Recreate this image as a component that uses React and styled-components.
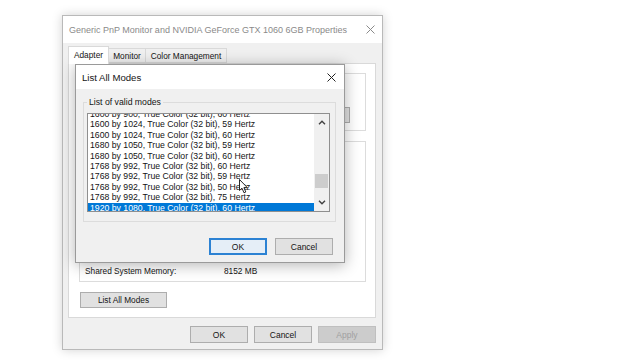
import React from "react"
import styled, { createGlobalStyle } from "styled-components"

const GlobalStyle = createGlobalStyle`
  html, body {
    margin: 0;
    padding: 0;
    background: #ffffff;
  }
  body {
    font-family: "Liberation Sans", Arial, sans-serif;
    color: #141414;
  }
  * {
    box-sizing: border-box;
  }
`

const modes = [
  ["1600 by 900", 60],
  ["1600 by 1024", 59],
  ["1600 by 1024", 60],
  ["1680 by 1050", 59],
  ["1680 by 1050", 60],
  ["1768 by 992", 60],
  ["1768 by 992", 59],
  ["1768 by 992", 50],
  ["1768 by 992", 75],
  ["1920 by 1080", 60],
]

const tabs = [
  { label: "Adapter", width: 41, active: true },
  { label: "Monitor", width: 38 },
  { label: "Color Management", width: 82 },
]

function CloseIcon({ color }) {
  return (
    <svg width="9" height="9" viewBox="0 0 9 9">
      <path d="M0.5 0.5 L8.5 8.5 M8.5 0.5 L0.5 8.5" stroke={color} strokeWidth="1" fill="none" />
    </svg>
  )
}

function Chevron({ up }) {
  return (
    <svg width="8" height="5" viewBox="0 0 8 5">
      <path
        d={up ? "M1 4.2 L4 1.2 L7 4.2" : "M1 0.8 L4 3.8 L7 0.8"}
        stroke="#404040"
        strokeWidth="1.4"
        fill="none"
      />
    </svg>
  )
}

export default function App() {
  return (
    <Page>
      <GlobalStyle />
      <PropertiesWindow>
        <TitleBar>
          <TitleText inactive>Generic PnP Monitor and NVIDIA GeForce GTX 1060 6GB Properties</TitleText>
          <CloseIcon color="#8a8a8a" />
        </TitleBar>
        <WindowBody>
          <TabRow>
            {tabs.map(t => (
              <Tab key={t.label} active={t.active} w={t.width}>
                {t.label}
              </Tab>
            ))}
          </TabRow>
          <TabPanel>
            <AdapterGroup>
              <Button w={70}>Properties</Button>
            </AdapterGroup>
            <InfoGroup>
              <InfoRow>
                <InfoLabel>Shared System Memory:</InfoLabel>
                <span>8152 MB</span>
              </InfoRow>
            </InfoGroup>
            <ListModesButton w={87}>List All Modes</ListModesButton>
          </TabPanel>
          <ButtonRow>
            <Button w={58} h={17}>OK</Button>
            <Button w={58} h={17}>Cancel</Button>
            <Button w={58} h={17} disabled>Apply</Button>
          </ButtonRow>
        </WindowBody>
      </PropertiesWindow>

      <ModesDialog>
        <InnerTitleBar>
          <TitleText>List All Modes</TitleText>
          <CloseIcon color="#222" />
        </InnerTitleBar>
        <InnerBody>
          <GroupBox>
            <GroupLegend>List of valid modes</GroupLegend>
            <ListBox>
              <ListItems>
                <ListScroll>
                  {modes.map(([res, hz], i) => (
                    <ListRow key={i} selected={i === modes.length - 1}>
                      {res}, True Color (32 bit), {hz} Hertz
                    </ListRow>
                  ))}
                </ListScroll>
              </ListItems>
              <ScrollBar>
                <ArrowButton>
                  <Chevron up />
                </ArrowButton>
                <Track>
                  <Thumb />
                </Track>
                <ArrowButton>
                  <Chevron />
                </ArrowButton>
              </ScrollBar>
            </ListBox>
          </GroupBox>
          <DialogButtons>
            <DefaultButton w={58} h={17}>OK</DefaultButton>
            <Button w={58} h={17}>Cancel</Button>
          </DialogButtons>
        </InnerBody>
      </ModesDialog>

      <Cursor width="10" height="15" viewBox="0 0 10 15">
        <path d="M0.5 0.5 L0.5 11.5 L3 9.2 L5 13.8 L6.8 13 L4.9 8.6 L8.3 8.6 Z" fill="#fff" stroke="#111" strokeWidth="0.9" />
      </Cursor>
    </Page>
  )
}

const Page = styled.div`
  position: relative;
  width: 640px;
  height: 360px;
  overflow: hidden;
  padding: 15px 0 0 62px;
`

// outer property sheet
const PropertiesWindow = styled.div`
  width: 321px;
  height: 335px;
  display: flex;
  flex-direction: column;
  background: #f0f0f0;
  border: 1px solid #b9b9b9;
  box-shadow: 0 0 10px rgba(0, 0, 0, 0.18);
`

const TitleBar = styled.div`
  height: 27px;
  flex-shrink: 0;
  display: flex;
  align-items: center;
  justify-content: space-between;
  padding: 0 7px 0 6px;
  background: #ffffff;
`

const TitleText = styled.span`
  font-size: ${p => (p.inactive ? "9px" : "9.6px")};
  color: ${p => (p.inactive ? "#8a8a8a" : "#141414")};
  white-space: nowrap;
`

const WindowBody = styled.div`
  flex: 1;
  display: flex;
  flex-direction: column;
  padding: 3px 6px 6px 5px;
  font-size: 8.3px;
`

const TabRow = styled.div`
  height: 17px;
  display: flex;
  align-items: flex-end;
`

const Tab = styled.div`
  width: ${p => p.w}px;
  height: ${p => (p.active ? 18 : 15)}px;
  margin-bottom: ${p => (p.active ? -1 : 0)}px;
  margin-left: ${p => (p.active ? 0 : -1)}px;
  display: flex;
  align-items: center;
  justify-content: center;
  padding-bottom: ${p => (p.active ? 2 : 0)}px;
  background: ${p => (p.active ? "#ffffff" : "#f0f0f0")};
  border: 1px solid #d9d9d9;
  border-bottom: ${p => (p.active ? "none" : "1px solid #d9d9d9")};
  position: relative;
  z-index: ${p => (p.active ? 1 : 0)};
  white-space: nowrap;
`

const TabPanel = styled.div`
  height: 255px;
  display: flex;
  flex-direction: column;
  gap: 10px;
  padding: 9px 9px 9px 10px;
  background: #ffffff;
  border: 1px solid #d9d9d9;
`

const AdapterGroup = styled.div`
  height: 58px;
  display: flex;
  align-items: flex-end;
  justify-content: flex-end;
  padding: 0 15px 7px 0;
  border: 1px solid #dcdcdc;
`

const InfoGroup = styled.div`
  height: 141px;
  display: flex;
  flex-direction: column;
  justify-content: flex-end;
  padding: 0 0 5px 5px;
  border: 1px solid #dcdcdc;
`

const InfoRow = styled.div`
  display: flex;
  line-height: 10px;
`

const InfoLabel = styled.span`
  width: 139px;
`

const Button = styled.div`
  width: ${p => p.w}px;
  height: ${p => p.h || 16}px;
  display: flex;
  align-items: center;
  justify-content: center;
  background: ${p => (p.disabled ? "#cccccc" : "#e1e1e1")};
  color: ${p => (p.disabled ? "#a0a0a0" : "#141414")};
  border: 1px solid ${p => (p.disabled ? "#bfbfbf" : "#adadad")};
  font-size: 8.5px;
  white-space: nowrap;
`

const ListModesButton = styled(Button)`
  margin-left: 1px;
  font-size: 8.3px;
`

const DefaultButton = styled(Button)`
  border: 2px solid #2c82d3;
  background: #e5eef7;
`

const ButtonRow = styled.div`
  display: flex;
  justify-content: flex-end;
  gap: 6px;
  margin-top: 8px;
`

// modal dialog lying over the property sheet
const ModesDialog = styled.div`
  position: absolute;
  left: 75px;
  top: 64px;
  width: 270px;
  height: 199px;
  display: flex;
  flex-direction: column;
  background: #f0f0f0;
  border: 1px solid #9a9a9a;
  box-shadow: 0 2px 14px rgba(0, 0, 0, 0.3);
`

const InnerTitleBar = styled(TitleBar)`
  height: 24px;
  padding: 0 8px 0 6px;
`

const InnerBody = styled.div`
  flex: 1;
  display: flex;
  flex-direction: column;
  padding: 8px 8px 0 7px;
`

const GroupBox = styled.fieldset`
  margin: 0;
  padding: 0 5px 9px 3px;
  border: 1px solid #dcdcdc;
  min-width: 0;
`

const GroupLegend = styled.legend`
  padding: 0 2px;
  font-size: 8.7px;
  line-height: 10px;
  color: #141414;
`

const ListBox = styled.div`
  margin-top: 6px;
  height: 99px;
  display: flex;
  background: #ffffff;
  border: 1px solid #8f8f8f;
`

const ListItems = styled.div`
  flex: 1;
  overflow: hidden;
`

const ListScroll = styled.div`
  margin-top: -5px;
`

const ListRow = styled.div`
  height: 10.4px;
  line-height: 10.4px;
  padding-left: 2px;
  font-size: 8.7px;
  white-space: nowrap;
  background: ${p => (p.selected ? "#0078d7" : "transparent")};
  color: ${p => (p.selected ? "#ffffff" : "#141414")};
`

const ScrollBar = styled.div`
  width: 15px;
  display: flex;
  flex-direction: column;
  background: #f0f0f0;
`

const ArrowButton = styled.div`
  height: 17px;
  display: flex;
  align-items: center;
  justify-content: center;
`

const Track = styled.div`
  flex: 1;
  padding: 43px 1px 0;
`

const Thumb = styled.div`
  height: 14px;
  background: #cdcdcd;
`

const DialogButtons = styled.div`
  display: flex;
  justify-content: flex-end;
  gap: 8px;
  margin-top: 16px;
  padding-right: 3px;
`

const Cursor = styled.svg`
  position: absolute;
  left: 239px;
  top: 179px;
`
